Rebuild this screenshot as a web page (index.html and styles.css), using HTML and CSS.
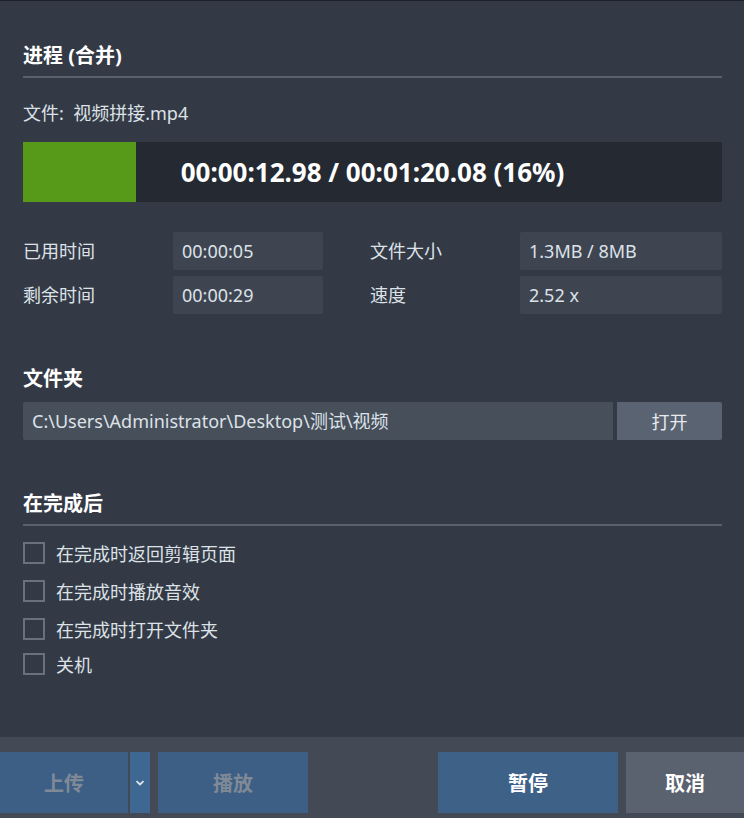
FILE: index.html
```html
<!DOCTYPE html>
<html lang="zh-CN">
<head>
    <meta charset="UTF-8">
    <title>进程 (合并)</title>
    <link rel="stylesheet" href="styles.css">
</head>
<body>
    <div class="page">
        <div class="content">
            <h2 class="section-title">进程 (合并)</h2>
            <div class="rule"></div>
            <div class="file-line">文件:&nbsp; 视频拼接.mp4</div>

            <div class="progress">
                <div class="progress-fill" style="width: 16.2%"></div>
                <div class="progress-text">00:00:12.98 / 00:01:20.08 (16%)</div>
            </div>

            <div class="stats">
                <div class="stat-label">已用时间</div>
                <div class="stat-value">00:00:05</div>
                <div class="stat-label indent">文件大小</div>
                <div class="stat-value">1.3MB / 8MB</div>
                <div class="stat-label">剩余时间</div>
                <div class="stat-value">00:00:29</div>
                <div class="stat-label indent">速度</div>
                <div class="stat-value">2.52 x</div>
            </div>

            <h2 class="section-title folder-title">文件夹</h2>
            <div class="folder-row">
                <div class="folder-path">C:\Users\Administrator\Desktop\测试\视频</div>
                <button class="open-button">打开</button>
            </div>

            <h2 class="section-title after-title">在完成后</h2>
            <div class="rule"></div>
            <ul class="options">
                <li><span class="check"></span>在完成时返回剪辑页面</li>
                <li><span class="check"></span>在完成时播放音效</li>
                <li class="short"><span class="check"></span>在完成时打开文件夹</li>
                <li class="last"><span class="check"></span>关机</li>
            </ul>
        </div>

        <div class="footer">
            <button class="btn btn-upload" disabled>上传</button>
            <button class="btn btn-arrow">
                <svg width="10" height="6" viewBox="0 0 10 6"><path d="M1.5 1.2 L5 4.5 L8.5 1.2" fill="none" stroke="#dfe6ee" stroke-width="1.8"/></svg>
            </button>
            <button class="btn btn-play" disabled>播放</button>
            <div class="spacer"></div>
            <button class="btn btn-pause">暂停</button>
            <button class="btn btn-cancel">取消</button>
        </div>
    </div>
</body>
</html>
```

FILE: styles.css
```css
html, body {
    margin: 0;
    padding: 0;
}
body {
    background: #343a45;
    color: #dde2e8;
    font-family: "Noto Sans", "Noto Sans CJK SC", sans-serif;
    font-size: 18px;
}
.page {
    height: 818px;
    display: flex;
    flex-direction: column;
    border-top: 1px solid #1d2129;
    box-sizing: border-box;
}
.content {
    flex: 1;
    padding: 0 22px 0 23px;
}
.section-title {
    margin: 41px 0 0;
    font-size: 20px;
    font-weight: bold;
    color: #fff;
    line-height: 28px;
}
.rule {
    height: 2px;
    background: #5a606b;
    margin-top: 6px;
}
.file-line {
    margin-top: 22px;
    line-height: 26px;
}
.progress {
    position: relative;
    margin-top: 16px;
    height: 60px;
    background: #252a32;
    border-radius: 2px;
    display: flex;
    align-items: center;
    justify-content: center;
}
.progress-fill {
    position: absolute;
    left: 0;
    top: 0;
    bottom: 0;
    background: #579a1a;
}
.progress-text {
    position: relative;
    font-size: 26px;
    font-weight: bold;
    color: #fff;
}
.stats {
    margin-top: 30px;
    display: grid;
    grid-template-columns: 150px 150px 197px 1fr;
    row-gap: 6px;
}
.stat-label {
    line-height: 38px;
}
.stat-label.indent {
    padding-left: 47px;
}
.stat-value {
    height: 38px;
    line-height: 38px;
    background: #3e4551;
    border-radius: 2px;
    padding-left: 9px;
}
.folder-title {
    margin-top: 51px;
}
.folder-row {
    display: flex;
    gap: 4px;
    margin-top: 9px;
    height: 38px;
}
.folder-path {
    flex: 1;
    background: #474f5b;
    line-height: 38px;
    padding-left: 9px;
    border-radius: 2px 0 0 2px;
}
.open-button {
    width: 105px;
    border: none;
    background: #5a6371;
    color: #e6eaee;
    font-family: inherit;
    font-size: 18px;
    border-radius: 0 2px 2px 0;
}
.after-title {
    margin-top: 50px;
}
.options {
    list-style: none;
    margin: 15px 0 0;
    padding: 0;
}
.options li {
    display: flex;
    align-items: center;
    gap: 11px;
    height: 24px;
    margin-bottom: 14px;
}
.options li.short {
    margin-bottom: 11px;
}
.options li.last {
    margin-bottom: 0;
}
.check {
    width: 18px;
    height: 18px;
    border: 2px solid #6b717b;
    display: inline-block;
}
.footer {
    height: 81px;
    background: #434a55;
    display: flex;
    align-items: flex-start;
    padding-top: 15px;
    box-sizing: border-box;
}
.btn {
    height: 61px;
    border: none;
    font-family: inherit;
    font-size: 20px;
    font-weight: bold;
    color: #fff;
    padding: 0;
}
.btn-upload {
    width: 128px;
    background: #3d5f86;
    color: #7f8a96;
}
.btn-arrow {
    width: 20px;
    margin-left: 2px;
    background: #3e6792;
    display: flex;
    align-items: center;
    justify-content: center;
}
.btn-play {
    width: 150px;
    margin-left: 8px;
    background: #3d5f86;
    color: #7f8a96;
}
.spacer {
    flex: 1;
}
.btn-pause {
    width: 180px;
    background: #3e6188;
}
.btn-cancel {
    width: 118px;
    margin-left: 8px;
    background: #5a6270;
}
```
